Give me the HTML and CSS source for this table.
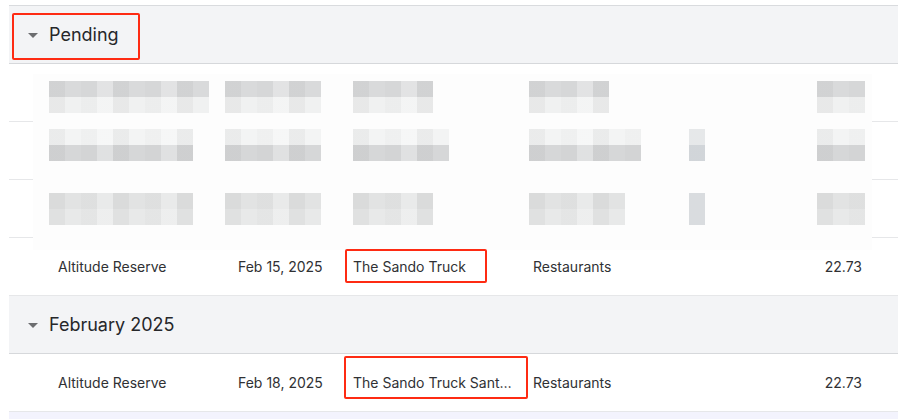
FILE: index.html
```html
<!DOCTYPE html>
<html lang="en">
<head>
<meta charset="utf-8">
<title>Transactions</title>
<link rel="stylesheet" href="styles.css">
</head>
<body>
<div class="page">
  <div class="table">
    <div class="group-header">
      <span class="caret"></span>
      <span class="group-title">Pending</span>
    </div>
    <div class="row"><span class="cell">&nbsp;</span></div>
    <div class="row"><span class="cell">&nbsp;</span></div>
    <div class="row"><span class="cell">&nbsp;</span></div>
    <div class="row">
      <span class="cell">Altitude Reserve</span>
      <span class="cell">Feb 15, 2025</span>
      <span class="cell merchant">The Sando Truck</span>
      <span class="cell">Restaurants</span>
      <span class="cell amount">22.73</span>
    </div>
    <div class="group-header">
      <span class="caret"></span>
      <span class="group-title">February 2025</span>
    </div>
    <div class="row">
      <span class="cell">Altitude Reserve</span>
      <span class="cell">Feb 18, 2025</span>
      <span class="cell merchant" title="The Sando Truck Santa Monica">The Sando Truck Sant…</span>
      <span class="cell">Restaurants</span>
      <span class="cell amount">22.73</span>
    </div>
    <div class="row selected"></div>

    <div class="redacted">
      <i class="px r1 a-acct1"></i><i class="px r1 a-date"></i><i class="px r1 a-merch1"></i><i class="px r1 a-cat1"></i><i class="px r1 a-amt"></i>
      <i class="px r2 a-acct2"></i><i class="px r2 a-date"></i><i class="px r2 a-merch2"></i><i class="px r2 a-cat2"></i><i class="px ic2 a-icon"></i><i class="px r2 a-amt"></i>
      <i class="px r3 a-acct2"></i><i class="px r3 a-date"></i><i class="px r3 a-merch1"></i><i class="px r3 a-cat3"></i><i class="px ic3 a-icon"></i><i class="px r3 a-amt"></i>
    </div>
  </div>

  <span class="annot annot-pending"></span>
  <span class="annot annot-m1"></span>
  <span class="annot annot-m2"></span>
</div>
</body>
</html>
```

FILE: styles.css
```css
* { box-sizing: border-box; }
html, body { margin: 0; padding: 0; background: #fff; }
body {
  font-family: Inter, "Noto Sans", "Liberation Sans", sans-serif;
  color: #2f3033;
  width: 898px;
  height: 419px;
  overflow: hidden;
}
.page {
  position: relative;
  padding: 5px 0 0 9px;
  height: 419px;
  overflow: hidden;
}
.table {
  position: relative;
  border-top: 1px solid #d9dbde;
}
.group-header {
  height: 58px;
  background: #f3f4f6;
  border-bottom: 1px solid #d6d8db;
  display: flex;
  align-items: center;
  padding-left: 19px;
  gap: 11px;
}
.caret {
  width: 0;
  height: 0;
  border-left: 5px solid transparent;
  border-right: 5px solid transparent;
  border-top: 5px solid #6c6d70;
  margin-top: 1px;
}
.group-title {
  font-size: 18px;
  color: #26272a;
}
.row {
  height: 58px;
  border-bottom: 1px solid #e6e7e9;
  display: grid;
  grid-template-columns: 180px 115px 180px 1fr auto;
  align-items: center;
  padding: 0 36px 1px 49px;
  font-size: 14px;
  color: #303134;
}
.cell { white-space: nowrap; min-width: 0; }
.merchant {
  overflow: hidden;
  text-overflow: ellipsis;
  padding-right: 16px;
}
.amount { text-align: right; }
.row.selected {
  background: #f3f3fd;
  border-bottom: none;
}

/* pixelated redaction overlay */
.redacted {
  position: absolute;
  left: 24px;
  top: 68px;
  width: 839px;
  height: 176px;
  background: #fdfdfd;
  display: grid;
  grid-template-columns: repeat(53, 16px);
  grid-template-rows: 7px repeat(11, 16px);
}
.px {
  display: block;
  background-image:
    repeating-linear-gradient(to right, rgba(0,0,0,0.035) 0 16px, rgba(0,0,0,0) 16px 32px, rgba(0,0,0,0.015) 32px 48px, rgba(255,255,255,0.25) 48px 64px),
    linear-gradient(to bottom, var(--t) 0 50%, var(--b) 50% 100%);
}
.r1 { --t: #d9dadb; --b: #f0f1f1; grid-row: 2 / span 2; }
.r2 { --t: #f3f4f4; --b: #d6d7d8; grid-row: 5 / span 2; }
.r3 { --t: #e2e3e3; --b: #e8e9e9; grid-row: 9 / span 2; }
.ic2 { --t: #eef0f2; --b: #d9dde1; grid-row: 5 / span 2; }
.ic3 { --t: #e1e4e7; --b: #e1e4e7; grid-row: 9 / span 2; }
.a-acct1 { grid-column: 2 / span 10; }
.a-acct2 { grid-column: 2 / span 9; }
.a-date  { grid-column: 13 / span 6; }
.a-merch1 { grid-column: 21 / span 5; }
.a-merch2 { grid-column: 21 / span 6; }
.a-cat1 { grid-column: 32 / span 5; }
.a-cat2 { grid-column: 32 / span 7; }
.a-cat3 { grid-column: 32 / span 6; }
.a-icon { grid-column: 42 / span 1; }
.a-amt  { grid-column: 50 / span 3; }

/* red annotation boxes */
.annot {
  position: absolute;
  border: 2px solid #fe2b13;
  border-radius: 2px;
}
.annot-pending { left: 12px; top: 13px; width: 128px; height: 47px; }
.annot-m1 { left: 345px; top: 249px; width: 142px; height: 34px; }
.annot-m2 { left: 344px; top: 356px; width: 184px; height: 43px; }
```
